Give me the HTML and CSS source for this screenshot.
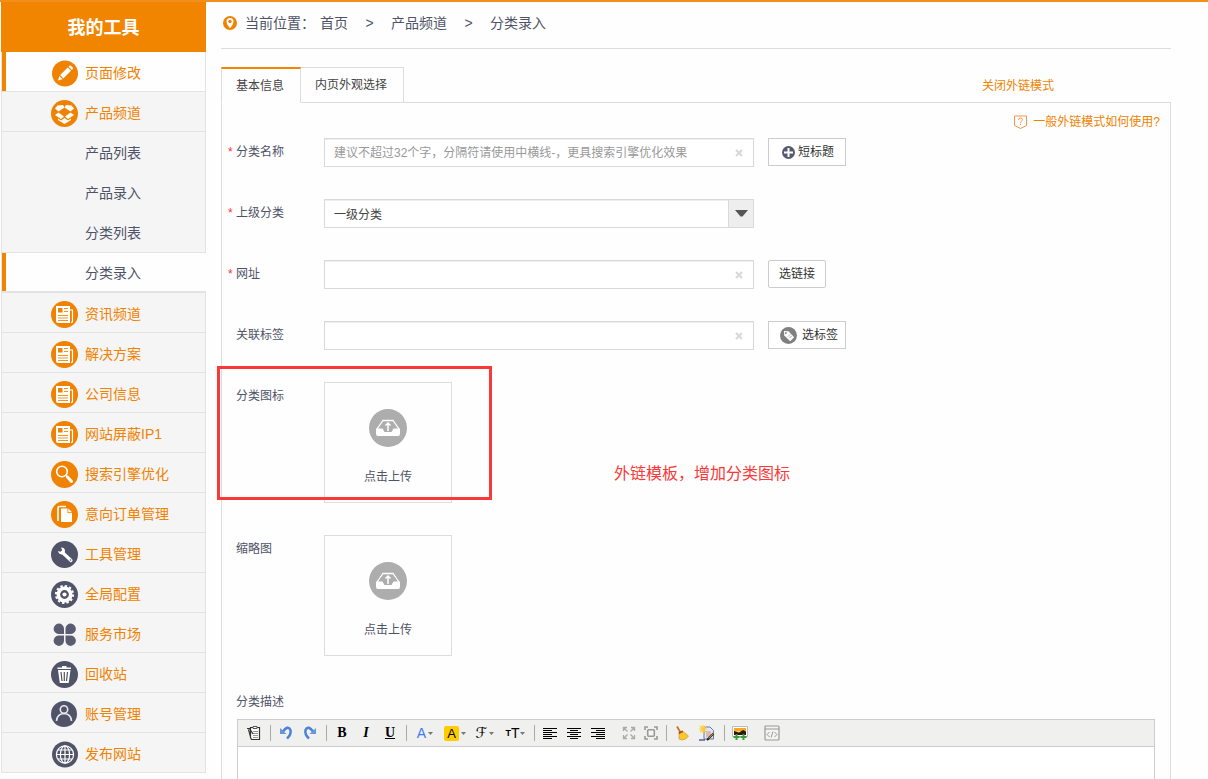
FILE: index.html
```html
<!DOCTYPE html>
<html lang="zh-CN">
<head>
<meta charset="utf-8">
<meta name="viewport" content="width=device-width, initial-scale=1">
<title>分类录入</title>
<link rel="stylesheet" href="styles.css">
</head>
<body>
<svg class="sprite" aria-hidden="true">
  <symbol id="i-news" viewBox="0 0 27 27">
    <circle cx="13.5" cy="13.5" r="13.5" fill="#ef8200"/>
    <path d="M5 5h14v17H7a2 2 0 0 1-2-2z" fill="#fff"/>
    <path d="M19 9h2.500v11.500q0 1-1.500 1" fill="none" stroke="#fff" stroke-width="1.200"/>
    <path d="M7 7h4.500v4.500H7z" fill="#ef8200"/>
    <path d="M13 7.500h4M13 10.500h4M7 14.500h10M7 17h10M7 19.500h10" stroke="#f0932a"/>
  </symbol>
  <symbol id="i-upload" viewBox="0 0 38 38">
    <circle cx="19" cy="19" r="19" fill="#adadad"/>
    <path d="M8 20l6-8.500h10l6 8.500" fill="none" stroke="#fff" stroke-width="1.300"/>
    <path d="M7 19.500h6.500l2 3.500h7l2-3.500H31V25q0 2-2 2H9q-2 0-2-2z" fill="#fff"/>
    <path d="M19 22v-7M16.500 16.500L19 14l2.500 2.500" fill="none" stroke="#fff" stroke-width="1.500"/>
  </symbol>
  <symbol id="i-clear" viewBox="0 0 8 8">
    <path d="M1 1l6 6M7 1L1 7" stroke="#d9d9d9" stroke-width="2.200"/>
  </symbol>
  <symbol id="i-drop" viewBox="0 0 5 3"><path d="M0 0h5L2.500 3z" fill="#777"/></symbol>
</svg>

<div class="page">
  <aside class="sidebar">
    <h1 class="sidebar-title">我的工具</h1>
    <nav class="nav">
      <a class="nav-item is-active" href="#"><svg class="nav-icon" viewBox="0 0 27 27"><circle cx="14" cy="13.500" r="13" fill="#ef8200"/><path d="M7 20.500l1.300-4.600 3.300 3.300zM9.100 15.100l7.600-7.600 3.300 3.300-7.600 7.600zM17.500 6.700l.9-.9q.8-.6 1.600 0l1.700 1.700q.7.800 0 1.600l-.9.9z" fill="#fff"/></svg>页面修改</a>
      <a class="nav-item" href="#"><svg class="nav-icon" viewBox="0 0 27 27"><circle cx="13.500" cy="13.500" r="13.500" fill="#ef8200"/><path d="M6.500 5.500L12 5l1.500 2.500-6 4L4 8.500zM20.500 5.500L15 5l-1.500 2.500 6 4L23 8.500zM7.500 12.500l5.500 4-3 2.500-6-4zM19.500 12.500l-5.500 4 3 2.500 6-4zM7 18.500l3 2 3.500-2.500 3.500 2.500 3-2v1.500L13.500 24 7 20z" fill="#fff"/></svg>产品频道</a>
      <a class="nav-item nav-sub" href="#">产品列表</a>
      <a class="nav-item nav-sub" href="#">产品录入</a>
      <a class="nav-item nav-sub" href="#">分类列表</a>
      <a class="nav-item nav-sub is-active is-current" href="#">分类录入</a>
      <a class="nav-item" href="#"><svg class="nav-icon"><use href="#i-news"/></svg>资讯频道</a>
      <a class="nav-item" href="#"><svg class="nav-icon"><use href="#i-news"/></svg>解决方案</a>
      <a class="nav-item" href="#"><svg class="nav-icon"><use href="#i-news"/></svg>公司信息</a>
      <a class="nav-item" href="#"><svg class="nav-icon"><use href="#i-news"/></svg>网站屏蔽IP1</a>
      <a class="nav-item" href="#"><svg class="nav-icon" viewBox="0 0 27 27"><circle cx="13.500" cy="13.500" r="13.500" fill="#ef8200"/><circle cx="11" cy="10.500" r="5.300" fill="none" stroke="#fff" stroke-width="1.600"/><path d="M15 14.500l1.500 1.500" stroke="#fff" stroke-width="1.500"/><path d="M16.500 16l4 4.500" stroke="#fff" stroke-width="3" stroke-linecap="round"/></svg>搜索引擎优化</a>
      <a class="nav-item" href="#"><svg class="nav-icon" viewBox="0 0 27 27"><circle cx="13.500" cy="13.500" r="13.500" fill="#ef8200"/><path d="M15 5.500H8.500q-1.500 0-1.500 1.500v13" fill="none" stroke="#fff" stroke-width="1.600"/><path d="M10 7.500h6.500v4.500H21v9H10z" fill="#fff"/><path d="M17.300 7.500L21 11.200h-3.700z" fill="#fff"/></svg>意向订单管理</a>
      <a class="nav-item" href="#"><svg class="nav-icon" viewBox="0 0 27 27"><circle cx="13.500" cy="13.500" r="13.500" fill="#515469"/><path d="M11.500 11.500l8.500 8" stroke="#fff" stroke-width="3.200" stroke-linecap="round"/><path d="M10 6.500q3.500-.2 4 3 0 3.500-3.500 4Q7.500 13 7 10l2.500.8 1.700-1.600z" fill="#fff"/><circle cx="19.500" cy="19" r=".8" fill="#515469"/></svg>工具管理</a>
      <a class="nav-item" href="#"><svg class="nav-icon" viewBox="0 0 27 27"><circle cx="13.500" cy="13.500" r="13.500" fill="#515469"/><circle cx="13.500" cy="13.500" r="8.600" fill="none" stroke="#fff" stroke-width="2" stroke-dasharray="2.400 2.100"/><circle cx="13.500" cy="13.500" r="6.200" fill="none" stroke="#fff" stroke-width="3.600"/><circle cx="13.500" cy="13.500" r="2.100" fill="#fff"/></svg>全局配置</a>
      <a class="nav-item" href="#"><svg class="nav-icon" viewBox="0 0 27 27"><path d="M13 13H7.500A5.200 5.200 0 1 1 13 7.500zM14.500 13V7.500A5.200 5.200 0 1 1 20 13zM13 14.500V20a5.200 5.200 0 1 1-5.500-5.500zM14.500 14.500H20A5.200 5.200 0 1 1 14.500 20z" fill="#5a5d70"/></svg>服务市场</a>
      <a class="nav-item" href="#"><svg class="nav-icon" viewBox="0 0 27 27"><circle cx="13.500" cy="13.500" r="13.500" fill="#515469"/><path d="M6.500 7.300h13.500M11 5.800h4.500" stroke="#fff" stroke-width="1.500"/><path d="M7 9h12.500l-1.800 13H8.800z" fill="#fff"/><path d="M10 11l1 9M13.300 11v9M16.500 11l-1 9" stroke="#515469" stroke-width="1.200"/></svg>回收站</a>
      <a class="nav-item" href="#"><svg class="nav-icon" viewBox="0 0 27 27"><circle cx="13" cy="13" r="13" fill="#515469"/><circle cx="13" cy="8.500" r="3.700" fill="none" stroke="#e8e8ec" stroke-width="1.600"/><path d="M5.500 20q.5-7 7.500-7.500 7 .5 7.500 7.500" fill="none" stroke="#e8e8ec" stroke-width="1.600"/></svg>账号管理</a>
      <a class="nav-item" href="#"><svg class="nav-icon" viewBox="0 0 27 27"><circle cx="14" cy="13.500" r="13" fill="#515469"/><g fill="none" stroke="#fff" stroke-width="1.200"><circle cx="14" cy="13.500" r="8.600"/><ellipse cx="14" cy="13.500" rx="4.600" ry="8.600"/><path d="M14 5v17M5.500 13.500h17M6.700 9h14.600M6.700 18h14.600"/></g></svg>发布网站</a>
    </nav>
  </aside>

  <main class="main">
    <nav class="crumbs" aria-label="当前位置">
      <svg class="crumb-pin" viewBox="0 0 14 14"><circle cx="7" cy="7" r="7" fill="#ef8200"/><path d="M7 12.300Q3.500 8 3.500 5.500a3.500 3.500 0 0 1 7 0Q10.500 8 7 12.300z" fill="#fff"/><circle cx="7" cy="5.500" r="1.700" fill="#ef8200"/></svg>
      <span class="crumb-label">当前位置：</span>
      <a href="#">首页</a><span class="crumb-sep">&gt;</span><a href="#">产品频道</a><span class="crumb-sep">&gt;</span><a href="#">分类录入</a>
    </nav>

    <div class="tabs">
      <button type="button" class="tab is-selected">基本信息</button>
      <button type="button" class="tab">内页外观选择</button>
      <a class="mode-link" href="#">关闭外链模式</a>
    </div>

    <form class="panel">
      <p class="help">
        <a class="help-link" href="#"><svg class="help-icon" viewBox="0 0 13 14"><path d="M.5 1h12v9.500L6.500 13.500.5 10.500z" fill="none" stroke="#f2954a"/><path d="M4.500 5q0-2 2-2t2 1.700q0 1-1.200 1.600-.8.500-.8 1.500M6.500 8.800v1.300" fill="none" stroke="#f2954a"/></svg>一般外链模式如何使用?</a>
      </p>

      <div class="row">
        <label class="label" for="name"><span class="star">*</span>分类名称</label>
        <div class="field">
          <input class="text" id="name" type="text" placeholder="建议不超过32个字，分隔符请使用中横线-，更具搜索引擎优化效果">
          <button type="button" class="clear" aria-label="清空"><svg viewBox="0 0 8 8"><use href="#i-clear"/></svg></button>
        </div>
        <button type="button" class="btn btn-icon"><svg class="plus" viewBox="0 0 13 13"><circle cx="6.500" cy="6.500" r="6.500" fill="#555a6d"/><path d="M6.500 2v9M2 6.500h9" stroke="#fff" stroke-width="2"/></svg>短标题</button>
      </div>

      <div class="row">
        <label class="label" for="parent"><span class="star">*</span>上级分类</label>
        <div class="field">
          <select class="text select" id="parent"><option>一级分类</option></select>
          <span class="arrow"><svg viewBox="0 0 13 7"><path d="M0 0h13L7.500 6.500h-2z" fill="#555"/></svg></span>
        </div>
      </div>

      <div class="row">
        <label class="label" for="url"><span class="star">*</span>网址</label>
        <div class="field">
          <input class="text" id="url" type="text">
          <button type="button" class="clear" aria-label="清空"><svg viewBox="0 0 8 8"><use href="#i-clear"/></svg></button>
        </div>
        <button type="button" class="btn btn-round">选链接</button>
      </div>

      <div class="row">
        <label class="label" for="tags"><span class="star"></span>关联标签</label>
        <div class="field">
          <input class="text" id="tags" type="text">
          <button type="button" class="clear" aria-label="清空"><svg viewBox="0 0 8 8"><use href="#i-clear"/></svg></button>
        </div>
        <button type="button" class="btn btn-tag"><svg class="tag" viewBox="0 0 17 17"><circle cx="8.500" cy="8.500" r="8.500" fill="#808080"/><path d="M4 4l4.500.3 5.200 5.500q.4.500 0 1l-3 3q-.5.400-1 0L4.300 8.500z" fill="#fff"/><circle cx="5.900" cy="6" r=".9" fill="#808080"/><path d="M8 9.500l2.500-2.500M9.500 11l2.500-2.500" stroke="#888" stroke-dasharray="1 .6"/></svg>选标签</button>
      </div>

      <div class="row row-icon">
        <label class="label" for="up-icon"><span class="star"></span>分类图标</label>
        <button type="button" class="upload" id="up-icon"><svg class="upload-icon"><use href="#i-upload"/></svg>点击上传</button>
        <span class="mark"></span>
        <span class="note">外链模板，增加分类图标</span>
      </div>

      <div class="row">
        <label class="label" for="up-thumb"><span class="star"></span>缩略图</label>
        <button type="button" class="upload" id="up-thumb"><svg class="upload-icon"><use href="#i-upload"/></svg>点击上传</button>
      </div>

      <div class="row row-desc">
        <label class="label" for="desc"><span class="star"></span>分类描述</label>
      </div>

      <div class="editor">
        <div class="toolbar">
          <button type="button" class="tool" aria-label="粘贴"><svg viewBox="0 0 16 16"><path d="M4.500 2.500h9v12h-8l-1-2z" fill="#fff" stroke="#333" stroke-width="1.200"/><path d="M7 1.500h4v2H7z" fill="#fff" stroke="#555"/><path d="M7 6.500h5M7 8.500h5M7 10.500h5M7 12.500h5" stroke="#999"/><path d="M1 3.500h2.500L7 9M2.500 4.500l2 7" fill="none" stroke="#333" stroke-width="1.200"/></svg></button>
          <span class="sep"></span>
          <button type="button" class="tool" aria-label="撤销"><svg viewBox="0 0 16 16"><path d="M4.500 7Q10-.5 12.500 5q1 4.500-3.500 8.500" fill="none" stroke="#4c82da" stroke-width="2.500"/><path d="M2 3v6h6.500z" fill="#6596e4"/></svg></button>
          <button type="button" class="tool" aria-label="重做"><svg viewBox="0 0 16 16"><path d="M11.500 7Q6-.5 3.500 5q-1 4.500 3.500 8.500" fill="none" stroke="#4c82da" stroke-width="2.500"/><path d="M14 3v6H7.500z" fill="#6596e4"/></svg></button>
          <span class="sep"></span>
          <button type="button" class="tool tool-b">B</button>
          <button type="button" class="tool tool-i">I</button>
          <button type="button" class="tool tool-u">U</button>
          <span class="sep"></span>
          <button type="button" class="tool tool-menu tool-color">A<svg class="drop"><use href="#i-drop"/></svg></button>
          <button type="button" class="tool tool-menu tool-hilite"><span class="swatch">A</span><svg class="drop"><use href="#i-drop"/></svg></button>
          <button type="button" class="tool tool-menu tool-font">ℱ<svg class="drop"><use href="#i-drop"/></svg></button>
          <button type="button" class="tool tool-menu tool-size"><small>T</small>T<svg class="drop"><use href="#i-drop"/></svg></button>
          <span class="sep"></span>
          <button type="button" class="tool" aria-label="左对齐"><svg viewBox="0 0 16 16"><path d="M1 3.500h14M1 5.500h9M1 7.500h14M1 9.500h9M1 11.500h14M1 13.500h9" stroke="#000"/></svg></button>
          <button type="button" class="tool" aria-label="居中"><svg viewBox="0 0 16 16"><path d="M1 3.500h14M4 5.500h8M1 7.500h14M4 9.500h8M1 11.500h14M4 13.500h8" stroke="#000"/></svg></button>
          <button type="button" class="tool" aria-label="右对齐"><svg viewBox="0 0 16 16"><path d="M1 3.500h14M6 5.500h9M1 7.500h14M6 9.500h9M1 11.500h14M6 13.500h9" stroke="#000"/></svg></button>
          <span class="sep sep-blank"></span>
          <button type="button" class="tool tool-narrow" aria-label="全屏"><svg viewBox="0 0 16 16"><path d="M2.500 6V2.500H6M3 3l3.500 3.500M10 2.500h3.500V6M13 3L9.500 6.500M2.500 10v3.500H6M3 13l3.500-3.500M10 13.500h3.500V10M13 13L9.500 9.500" fill="none" stroke="#aaa" stroke-width="1.300"/></svg></button>
          <button type="button" class="tool tool-narrow" aria-label="适应窗口"><svg viewBox="0 0 16 16"><path d="M2 5V2h3M11 2h3v3M2 11v3h3M11 14h3v-3" fill="none" stroke="#999" stroke-width="1.600"/><rect x="4.700" y="4.700" width="6.600" height="6.600" rx="1" fill="#f5f5f5" stroke="#999" stroke-width="1.600"/></svg></button>
          <span class="sep"></span>
          <button type="button" class="tool" aria-label="清除格式"><svg viewBox="0 0 16 16"><path d="M3 1.500l3.500 6" stroke="#b97a24" stroke-width="1.800"/><path d="M5 8l3.500-1.800 6 4.800q-2 3.500-6.500 4L5 14z" fill="#f7c92e" stroke="#d29a18" stroke-width=".7"/><path d="M4.800 8.300l4-2" stroke="#c8372b" stroke-width="1.800"/></svg></button>
          <button type="button" class="tool tool-wide" aria-label="模板"><svg viewBox="0 0 16 16"><path d="M5 2h6l3.500 3.500V14H5z" fill="#dfe8f8" stroke="#667aa6"/><path d="M7 7h5M7 9h5M7 11h4" stroke="#d98a6a"/><path d="M4 0v8M0 4h8M1 1l6 6M7 1L1 7" stroke="#fc3" stroke-width="1.200"/><path d="M8 15l6.500-6.500" stroke="#222" stroke-width="2.200"/><path d="M9.500 13.300l5-5" stroke="#f0a030"/><path d="M0 15h6" stroke="#24407a" stroke-width="1.200"/></svg></button>
          <span class="sep"></span>
          <button type="button" class="tool" aria-label="图片"><svg viewBox="0 0 16 16"><path d="M.5 1.500h15v10H.5z" fill="#fff" stroke="#bbb"/><path d="M2 3h12v3.500H2z" fill="#f8a81c"/><path d="M2 6l5 1.500L11 5l3 1.500V10H2z" fill="#2b1a0a"/><path d="M4.500 9v6M1.500 12h6M11.500 9v6M8.500 12h6" stroke="#3a9e3a" stroke-width="2"/></svg></button>
          <span class="sep sep-blank"></span>
          <button type="button" class="tool" aria-label="源代码"><svg viewBox="0 0 16 16"><rect x="1" y="1" width="14" height="14" rx="1" fill="#f3f3f1" stroke="#999" stroke-width="1.200"/><path d="M1 4h14M5.500 7L3 9.500 5.500 12M10.500 7L13 9.500 10.500 12M9 6.500l-2 6" fill="none" stroke="#999"/></svg></button>
        </div>
        <textarea class="editor-body" id="desc"></textarea>
      </div>
    </form>
  </main>
</div>
</body>
</html>
```
FILE: styles.css
```css
* { box-sizing: border-box; }
body {
  margin: 0;
  background: #fefefe;
  color: #4f5367;
  font: 12px/20px "Liberation Sans", "Noto Sans CJK SC", sans-serif;
}
a { color: inherit; text-decoration: none; }
button, input, select, textarea { font: inherit; color: inherit; border-radius: 0; }
button { padding: 0; border: 0; background: none; cursor: pointer; }
svg { display: block; flex: none; }
.sprite { position: absolute; width: 0; height: 0; }

.page { display: flex; min-height: 100vh; border-top: 2px solid #f28f1c; }

/* Sidebar */
.sidebar { flex: none; width: 205px; margin-left: 1px; }
.sidebar-title {
  margin: 0;
  padding-top: 2px;
  background: #f28500;
  color: #fff;
  font-size: 18px;
  line-height: 48px;
  font-weight: 700;
  text-align: center;
}
.nav { border: solid #e3e3e3; border-width: 0 1px; background: #f5f5f5; }
.nav-item {
  display: flex;
  align-items: center;
  gap: 7px;
  height: 40px;
  padding: 3px 0 0 49px;
  border-bottom: 1px solid #e3e3e3;
  color: #f08200;
  font-size: 14px;
}
.nav-icon { width: 27px; height: 27px; }
.nav-sub { padding: 2px 0 0 83px; border-bottom: 0; color: #4f5367; }
.is-active { background: #fefefe; box-shadow: inset 4px 0 #f28500; }
.is-current { height: 41px; margin-right: -1px; border-top: 1px solid #e3e3e3; border-bottom: 2px solid #e3e3e3; }

/* Main column */
.main { flex: 1; min-width: 0; display: flex; flex-direction: column; margin: 0 37px 0 15px; }
.crumbs {
  display: flex;
  align-items: center;
  height: 47px;
  padding: 0 0 4px 2px;
  border-bottom: 1px solid #ddd;
  font-size: 14px;
}
.crumb-pin { width: 14px; height: 14px; margin-right: 8px; }
.crumb-label { margin-right: 5px; }
.crumb-sep { width: 43px; text-align: center; }

.tabs { display: flex; align-items: center; height: 36px; margin-top: 18px; border-bottom: 1px solid #ddd; }
.tab {
  height: 36px;
  padding: 0 16px 0 14px;
  border: 1px solid #ddd;
  border-left: 0;
  color: #444;
}
.tab.is-selected {
  padding-top: 1px;
  border-left: 1px solid #ddd;
  border-top: 2px solid #f28500;
  border-bottom-color: #fefefe;
  background: #fefefe;
}
.mode-link { margin: 0 117px 0 auto; padding-top: 2px; color: #f08200; }

.panel { flex: 1; display: flex; flex-direction: column; border: solid #ddd; border-width: 0 1px; }
.help { display: flex; align-items: center; justify-content: flex-end; height: 35px; margin: 0; padding: 2px 10px 0 0; }
.help-link { display: flex; align-items: center; gap: 6px; color: #f08200; }
.help-icon { width: 13px; height: 14px; }

/* Form rows */
.row { display: flex; align-items: flex-start; margin-bottom: 32px; }
.label { flex: none; display: flex; width: 102px; padding-left: 6px; line-height: 28px; }
.star { width: 8px; color: #f33; }
.field { position: relative; flex: 0 1 430px; margin-right: 14px; }
.text {
  display: block;
  width: 100%;
  height: 29px;
  padding: 0 30px 0 9px;
  border: 1px solid #d9d9d9;
  background: #fff;
  box-shadow: inset 0 1px #eee;
  color: #444;
}
.text::placeholder { color: #999; opacity: 1; }
.select { padding-top: 2px; appearance: none; }
.arrow {
  position: absolute;
  inset: 1px 1px 1px auto;
  display: grid;
  place-items: center;
  width: 25px;
  border-left: 1px solid #d9d9d9;
  background: #eee;
  pointer-events: none;
}
.arrow svg { width: 13px; height: 7px; }
.clear { position: absolute; top: 11px; right: 11px; }
.clear svg { width: 8px; height: 8px; }
.btn {
  display: flex;
  align-items: center;
  height: 28px;
  padding: 0 9px;
  border: 1px solid #ccc;
  background: #fff;
  color: #333;
}
.btn-round { padding: 0 10px; border-radius: 2px; }
.btn-icon { gap: 3px; padding: 0 11px 0 13px; }
.btn-tag { gap: 5px; padding: 0 7px 0 11px; }
.plus { width: 13px; height: 13px; }
.tag { width: 17px; height: 17px; }
.upload {
  display: flex;
  flex-direction: column;
  align-items: center;
  gap: 20px;
  width: 128px;
  height: 121px;
  padding-top: 26px;
  border: 1px solid #ddd;
}
.upload-icon { width: 38px; height: 38px; }

/* Annotation over the icon row */
.row-icon { position: relative; }
.mark { position: absolute; top: -16px; left: -5px; width: 275px; height: 134px; border: 3px solid #f93838; pointer-events: none; }
.note { position: absolute; top: 82px; left: 392px; color: #f93838; font-size: 16px; }
.row-desc { margin-bottom: 3px; }

/* Editor */
.editor { flex: 1; display: flex; flex-direction: column; margin: 0 15px; border: 1px solid #ccc; border-bottom: 0; background: #fff; }
.toolbar { display: flex; align-items: center; height: 27px; padding-left: 4px; border-bottom: 1px solid #ccc; background: #f0f0ee; }
.tool { display: flex; align-items: center; justify-content: center; width: 24px; height: 24px; color: #000; }
.tool svg { width: 16px; height: 16px; }
.tool-narrow { width: 22px; }
.tool-wide { width: 26px; }
.tool-b, .tool-i, .tool-u { font: 700 14px/24px "Liberation Serif", serif; }
.tool-i { font-style: italic; }
.tool-u { text-decoration: underline; }
.tool-menu { width: 30px; gap: 2px; font-size: 13px; }
.tool-menu .drop { width: 5px; height: 3px; }
.tool-color { color: #3a7bf0; font-size: 14px; }
.swatch { width: 15px; border-radius: 2px; background: #fc0; line-height: 15px; }
.tool-font { font: 15px/24px "DejaVu Sans", sans-serif; }
.tool-size { gap: 0; font-size: 14px; }
.tool-size small { font-size: 9px; font-weight: 700; }
.sep { width: 8px; height: 16px; background: linear-gradient(#aaa, #aaa) center / 1px 100% no-repeat; }
.sep-blank { background: none; }
.editor-body { flex: 1; width: 100%; height: 0; min-height: 0; padding: 4px; border: 0; background: #fff; resize: none; overflow: hidden; }
```
